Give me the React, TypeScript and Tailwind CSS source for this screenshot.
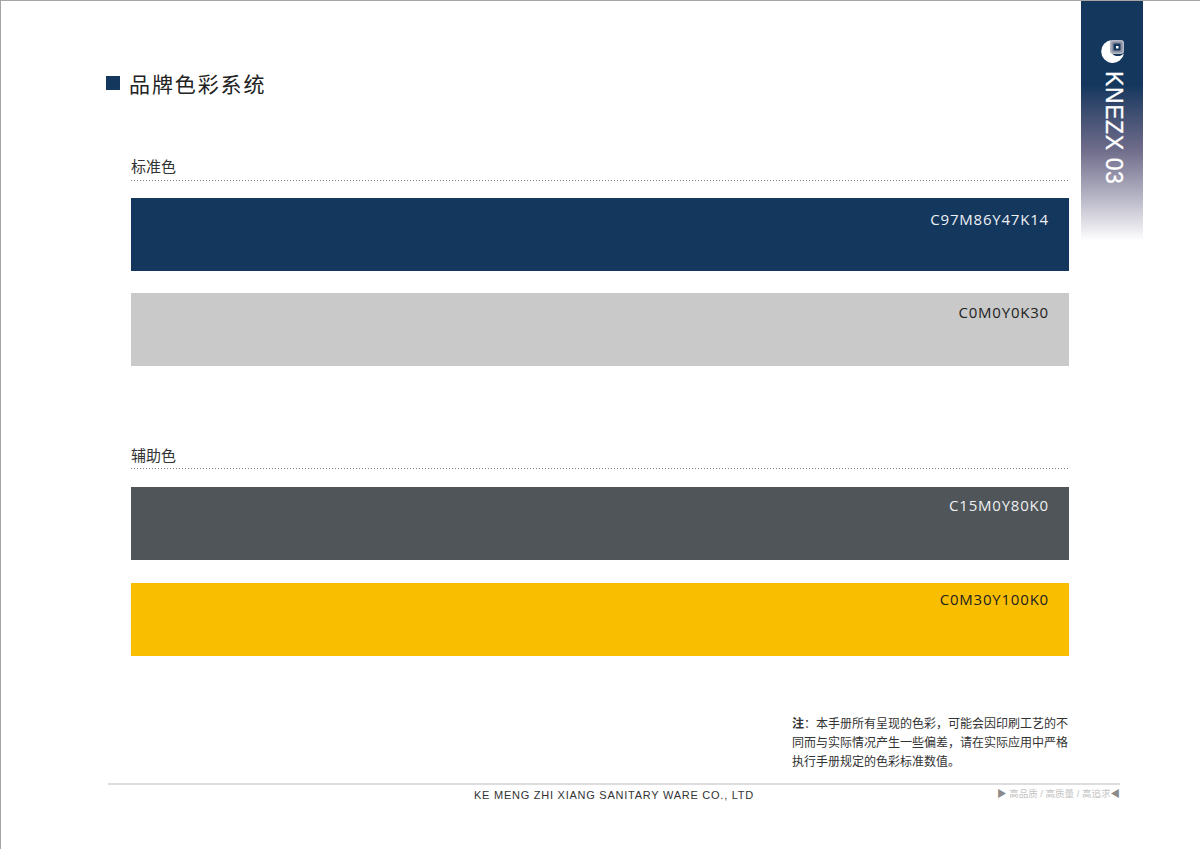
const cjk = "font-['Liberation_Sans','Noto_Sans_CJK_SC',sans-serif]"

function Swatch({ code, bg, text, top }: { code: string; bg: string; text: string; top: string }) {
  return (
    <div className={`h-[73px] flex justify-end pr-[20px] ${bg} ${top}`}>
      <span className={`font-['Open_Sans',sans-serif] text-[15px] leading-[20px] tracking-[0.8px] ${text}`}>{code}</span>
    </div>
  )
}

function SectionLabel({ label, top }: { label: string; top: string }) {
  return (
    <div className="h-[25px] flex flex-col justify-between">
      <span className={`${cjk} block text-[15px] leading-[20px] text-[#333333] ${top}`}>{label}</span>
      <div className="h-px bg-[linear-gradient(to_right,#808080_1px,transparent_1px)] bg-[length:3px_1px]" />
    </div>
  )
}

function SideTab() {
  return (
    <div className="absolute top-0 left-[1080px] w-[62px] h-[240px] flex flex-col items-center pt-[38px] bg-gradient-to-b from-[#14375e] from-[35%] via-[#6f6c8a] via-[62%] to-white">
      <svg width="24" height="24" viewBox="0 0 24 24" className="ml-[1px]">
        <path d="M10.5 1 A11.5 11.5 0 1 0 23 14.5 C20 17.5 15 18 12 15.5 C8.5 12.5 8 5 10.5 1 Z" fill="#ffffff" />
        <rect x="9" y="1" width="14" height="14" rx="3" fill="#b4b8c4" />
        <rect x="10.5" y="2.5" width="11" height="11" rx="2" fill="#8a90a4" />
        <rect x="12.5" y="4.5" width="7" height="7" rx="1" fill="#14375e" />
        <rect x="15" y="7" width="2.5" height="2.5" fill="#ffffff" />
      </svg>
      <span className="mt-[8px] ml-[4px] font-['Liberation_Sans',sans-serif] text-[23px] leading-[26px] tracking-[0.6px] text-white [-webkit-text-stroke:0.3px_white] whitespace-nowrap [writing-mode:vertical-rl]">
        KNEZX 03
      </span>
    </div>
  )
}

export default function App() {
  return (
    <div className="relative w-[1200px] h-[849px] overflow-hidden bg-white border-t border-l border-[#a8a4a4]">
      <SideTab />

      {/* Heading */}
      <div className="flex items-start gap-[9px] pt-[71px] pl-[105px] h-[155px]">
        <div className="w-[14px] h-[14px] bg-[#14375e] mt-[4px]" />
        <h1 className={`${cjk} text-[21px] leading-[26px] tracking-[1.9px] text-[#222222] font-normal`}>品牌色彩系统</h1>
      </div>

      <div className="w-[938px] ml-[130px]">
        <SectionLabel label="标准色" top="pt-[1px]" />
        <div className="mt-[17px] flex flex-col gap-[22px]">
          <Swatch code="C97M86Y47K14" bg="bg-[#14375e]" text="text-[#eef0f3]" top="pt-[11px]" />
          <Swatch code="C0M0Y0K30" bg="bg-[#c9c9c9]" text="text-[#222222]" top="pt-[9px]" />
        </div>

        <div className="mt-[78px]">
          <SectionLabel label="辅助色" top="pt-[2px]" />
        </div>
        <div className="mt-[18px] flex flex-col gap-[23px]">
          <Swatch code="C15M0Y80K0" bg="bg-[#4f5559]" text="text-[#eef0f0]" top="pt-[8px]" />
          <Swatch code="C0M30Y100K0" bg="bg-[#fabe00]" text="text-[#222222]" top="pt-[6px]" />
        </div>
      </div>

      {/* Note */}
      <p className={`${cjk} w-[290px] ml-[791px] mt-[59px] text-[12px] leading-[19px] text-[#333333]`}>
        <b>注</b>：本手册所有呈现的色彩，可能会因印刷工艺的不
        <br />
        同而与实际情况产生一些偏差，请在实际应用中严格
        <br />
        执行手册规定的色彩标准数值。
      </p>

      {/* Footer */}
      <div className="w-[1012px] ml-[107px] mt-[11px] border-t-2 border-[#dddddd] relative flex justify-center pt-[3px]">
        <span className="font-['Liberation_Sans',sans-serif] text-[11px] leading-[14px] tracking-[0.75px] text-[#333333]">
          KE MENG ZHI XIANG SANITARY WARE CO., LTD
        </span>
        <span className={`${cjk} absolute right-0 top-[2px] text-[9.5px] leading-[14px] text-[#c4c4c4] whitespace-nowrap`}>
          <span className="text-[#8a8a8a]">▶</span> 高品质 / 高质量 / 高追求<span className="text-[#8a8a8a]">◀</span>
        </span>
      </div>
    </div>
  )
}
